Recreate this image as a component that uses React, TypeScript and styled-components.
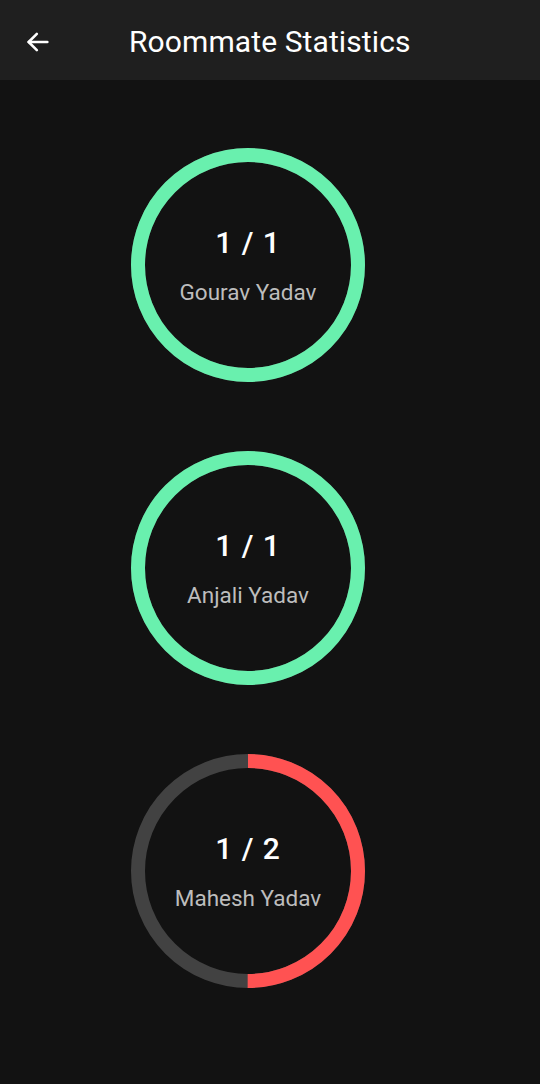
import styled, { createGlobalStyle } from "styled-components";

const GlobalStyle = createGlobalStyle`
  html, body {
    margin: 0;
    padding: 0;
    background: #121212;
  }
  body {
    font-family: Roboto, "Noto Sans", "Liberation Sans", sans-serif;
    color: #ffffff;
  }
`

const Page = styled.div`
  min-height: 1084px;
  background: #121212;
`

const Header = styled.header`
  display: flex;
  align-items: center;
  height: 80px;
  box-sizing: border-box;
  background: #1f1f1f;
  padding: 4px 0 0 24px;
`

const BackButton = styled.button`
  display: flex;
  align-items: center;
  justify-content: center;
  width: 28px;
  height: 28px;
  padding: 0;
  background: none;
  border: none;
  color: #ffffff;
`

const Title = styled.h1`
  margin: 0 0 0 77px;
  font-size: 30px;
  font-weight: 400;
  line-height: 36px;
  letter-spacing: 0.1px;
  color: #ffffff;
`

const StatsList = styled.div`
  display: flex;
  flex-direction: column;
  gap: 69px;
  padding: 68px 0 0 131px;
`

const RingWrapper = styled.div`
  position: relative;
  width: 234px;
  height: 234px;
`

const RingLabel = styled.div`
  position: absolute;
  inset: 0;
  display: flex;
  flex-direction: column;
  align-items: center;
  justify-content: center;
  gap: 19px;
  padding-top: 5px;
`

const Count = styled.div`
  font-size: 30px;
  line-height: 30px;
  font-weight: 500;
  letter-spacing: 1px;
  color: #ffffff;
`

const Name = styled.div`
  font-size: 22.5px;
  line-height: 30px;
  font-weight: 400;
  color: #bdbdbd;
`

type Roommate = {
  name: string;
  done: number;
  total: number;
}

const roommates: Roommate[] = [
  { name: "Gourav Yadav", done: 1, total: 1 },
  { name: "Anjali Yadav", done: 1, total: 1 },
  { name: "Mahesh Yadav", done: 1, total: 2 },
]

const StatRing = ({ name, done, total }: Roommate): JSX.Element => {
    const r = 110;
    const c = 2 * Math.PI * r;
    const ratio = done / total;
    const color = ratio >= 1 ? "#69f0ae" : "#ff5252";
    return (
        <RingWrapper>
            <svg width="234" height="234" viewBox="0 0 234 234">
                <circle cx="117" cy="117" r={r} fill="none" stroke="#424242" strokeWidth="14" />
                <circle
                    cx="117"
                    cy="117"
                    r={r}
                    fill="none"
                    stroke={color}
                    strokeWidth="14"
                    strokeDasharray={`${c * ratio} ${c}`}
                    transform="rotate(-90 117 117)"
                />
            </svg>
            <RingLabel>
                <Count>{done} / {total}</Count>
                <Name>{name}</Name>
            </RingLabel>
        </RingWrapper>
    )
}

const App = (): JSX.Element => {
    return (
        <Page>
            <GlobalStyle />
            <Header>
                <BackButton aria-label="Back">
                    <svg width="28" height="28" viewBox="0 0 24 24" fill="none" stroke="currentColor" strokeWidth="2.2" strokeLinecap="round" strokeLinejoin="round">
                        <path d="M20 12H4" />
                        <path d="M11 5l-7 7 7 7" />
                    </svg>
                </BackButton>
                <Title>Roommate Statistics</Title>
            </Header>
            <StatsList>
                {roommates.map((r) => (
                    <StatRing key={r.name} {...r} />
                ))}
            </StatsList>
        </Page>
    )
}

export default App;
